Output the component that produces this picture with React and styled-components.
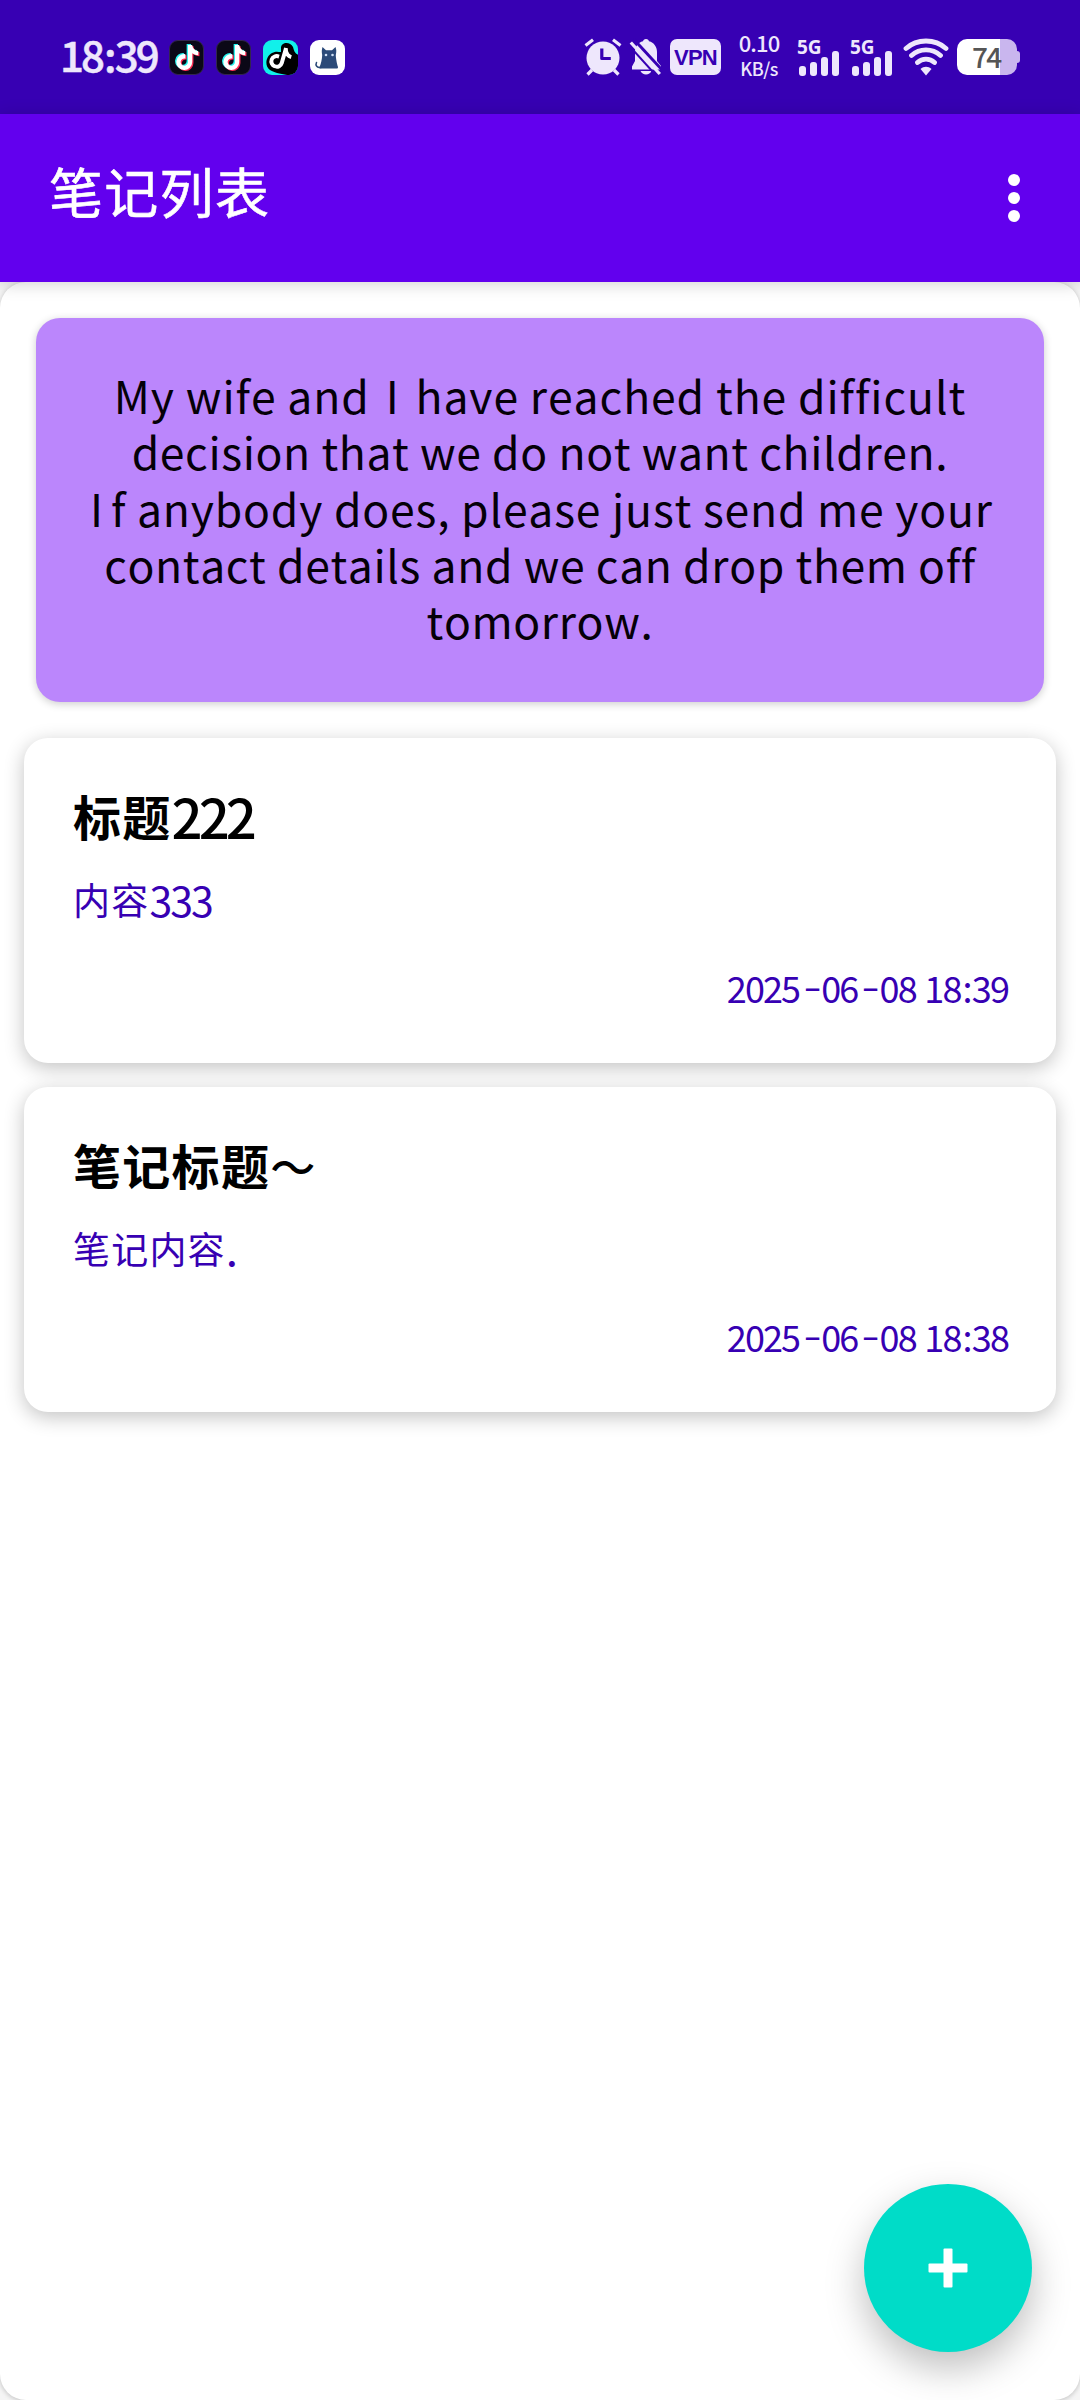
import React from "react";
import styled, { createGlobalStyle } from "styled-components";
import { FaTiktok } from "react-icons/fa";

const pallet = {
  primary: "#6200ee",
  primaryDark: "#3700b3",
  primaryLight: "#bb86fc",
  secondary: "#00dcc8",
  status: "#eee7fc",
};

const GlobalStyle = createGlobalStyle`
  * {
    box-sizing: border-box;
    margin: 0;
    padding: 0;
  }
  body {
    background-color: #f5f5f5;
    font-family: "Noto Sans CJK SC", "Noto Sans", sans-serif;
    overflow: hidden;
  }
`;

const Screen = styled.div`
  width: 1080px;
  height: 2400px;
  display: flex;
  flex-direction: column;
`;

const StatusBar = styled.header`
  flex: none;
  height: 114px;
  padding: 0 60px;
  display: flex;
  justify-content: space-between;
  background-color: ${pallet.primaryDark};
  color: ${pallet.status};
`;

const StatusGroup = styled.div`
  display: flex;
  align-items: center;
  height: 114px;
  svg {
    display: block;
    flex: none;
  }
`;

const Clock = styled.span`
  width: 109px;
  margin-top: -6px;
  font-size: 42px;
  font-weight: 500;
  line-height: 42px;
  letter-spacing: -2.9px;
  white-space: nowrap;
  -webkit-text-stroke: 0.5px ${pallet.status};
  i {
    font-style: normal;
    margin: 0 1px 0 2px;
  }
`;

const AppIcons = styled.div`
  display: flex;
  gap: 12px;
`;

const StatusIcons = styled.div`
  display: flex;
  gap: 7px;
`;

const VpnBadge = styled.span`
  width: 51px;
  height: 36px;
  margin-left: 8px;
  border-radius: 7px;
  background-color: ${pallet.status};
  color: ${pallet.primaryDark};
  font-family: "Liberation Sans", sans-serif;
  font-size: 22px;
  font-weight: 700;
  line-height: 37px;
  letter-spacing: -0.8px;
  text-align: center;
`;

const NetSpeed = styled.div`
  width: 46px;
  margin: -4px 0 0 15px;
  display: flex;
  flex-direction: column;
  align-items: center;
  font-weight: 500;
  white-space: nowrap;
  span {
    font-size: 22px;
    line-height: 25px;
    letter-spacing: -0.9px;
  }
  small {
    font-size: 18px;
    line-height: 26px;
    letter-spacing: -0.5px;
  }
`;

const SignalBlock = styled.div`
  width: 43px;
  height: 37px;
  margin-left: ${(props) => props.$gap}px;
  display: flex;
  flex-direction: column;
  justify-content: space-between;
`;

const SignalLabel = styled.span`
  height: 12px;
  font-family: "Noto Sans", sans-serif;
  font-size: 19px;
  font-weight: 700;
  line-height: 16px;
`;

const SignalBars = styled.div`
  padding-left: 2px;
  display: flex;
  align-items: flex-end;
  gap: 4px;
`;

const SignalBar = styled.i`
  width: 7px;
  height: ${(props) => props.$height}px;
  border-radius: 3px;
  background-color: ${pallet.status};
`;

const WifiBox = styled.div`
  margin-left: 10px;
`;

const Battery = styled.div`
  display: flex;
  align-items: center;
  margin-left: 8px;
`;

const BatteryBody = styled.div`
  width: 60px;
  height: 36px;
  border-radius: 10px;
  background: linear-gradient(to right, #fff 43px, #c9b6ee 43px);
  color: #555;
  font-size: 28px;
  font-weight: 500;
  line-height: 34px;
  letter-spacing: -1.6px;
  padding-left: 15px;
`;

const BatteryTip = styled.div`
  width: 3px;
  height: 12px;
  border-radius: 0 3px 3px 0;
  background-color: #c9b6ee;
`;

const AppBar = styled.div`
  flex: none;
  position: relative;
  z-index: 1;
  height: 168px;
  padding: 0 60px 0 49px;
  display: flex;
  align-items: center;
  justify-content: space-between;
  background-color: ${pallet.primary};
  box-shadow: 0 2px 16px rgba(0, 0, 0, 0.18);
  h1 {
    color: white;
    font-size: 54px;
    font-weight: 400;
    line-height: 80px;
    letter-spacing: 1.3px;
    margin-top: -14px;
    -webkit-text-stroke: 0.6px white;
  }
`;

const MoreButton = styled.button`
  all: unset;
  width: 12px;
  display: flex;
  flex-direction: column;
  gap: 6px;
  i {
    width: 12px;
    height: 12px;
    border-radius: 50%;
    background-color: white;
  }
`;

const Sheet = styled.main`
  position: relative;
  flex: 1;
  padding: 36px 24px 0;
  border-radius: 26px;
  background-color: white;
  box-shadow: 0 1px 5px rgba(0, 0, 0, 0.22);
`;

const QuoteCard = styled.section`
  height: 384px;
  margin: 0 12px 36px;
  padding-top: 49px;
  border-radius: 24px;
  background-color: ${pallet.primaryLight};
  box-shadow: 0 2px 9px rgba(0, 0, 0, 0.2);
  text-align: center;
`;

const QuoteLine = styled.p`
  height: 56.3px;
  color: #050008;
  font-size: 44.5px;
  line-height: 56.3px;
  letter-spacing: ${(props) => props.$spacing}px;
  white-space: nowrap;
  font-variant-ligatures: none;
  font-kerning: none;
`;

const WideLetter = styled.span`
  margin: ${(props) => props.$margin};
`;

const NoteList = styled.ul`
  list-style: none;
  display: flex;
  flex-direction: column;
  gap: 24px;
`;

const NoteCard = styled.li`
  height: 325px;
  padding: 45px 48px 0 49px;
  border-radius: 24px;
  background-color: white;
  box-shadow: 0 5px 20px rgba(0, 0, 0, 0.24);
  h2 {
    height: 64px;
    font-size: 48px;
    font-weight: 700;
    line-height: 64px;
    letter-spacing: 1.3px;
    color: black;
  }
  p {
    height: 60px;
    margin-top: 22px;
    font-size: 37px;
    line-height: 60px;
    letter-spacing: 1.2px;
    color: ${pallet.primaryDark};
  }
`;

const Digits = styled.span`
  font-size: ${(props) => props.$size}px;
  font-weight: ${(props) => props.$weight || 400};
  line-height: 1;
  letter-spacing: ${(props) => props.$spacing}px;
  vertical-align: ${(props) => props.$drop || 0}px;
`;

const NoteDate = styled.time`
  display: block;
  margin: 32px 0 0 0;
  font-size: 36px;
  line-height: 52px;
  letter-spacing: -1.9px;
  word-spacing: 2.5px;
  text-align: right;
  white-space: nowrap;
  color: ${pallet.primaryDark};
`;

const Dash = styled.span`
  display: inline-block;
  margin: 0 4.5px 0 7px;
  line-height: 1;
  vertical-align: 3px;
  transform: scaleX(1.45);
`;

const Colon = styled.span`
  margin: 0 1.2px 0 2px;
`;

const AddButton = styled.button`
  all: unset;
  position: absolute;
  right: 48px;
  bottom: 48px;
  width: 168px;
  height: 168px;
  border-radius: 50%;
  display: flex;
  align-items: center;
  justify-content: center;
  background-color: ${pallet.secondary};
  box-shadow: 0 16px 38px rgba(0, 0, 0, 0.26);
`;

const TiktokIcon = () => (
  <svg width="35" height="35" viewBox="0 0 35 35">
    <rect x="0.5" y="0.5" width="34" height="34" rx="8.5" fill="#0b0817" stroke="#33264f" />
    <FaTiktok x="4.5" y="4" size={25} color="#25f4ee" />
    <FaTiktok x="7" y="6" size={25} color="#fe2c55" />
    <FaTiktok x="5.8" y="5" size={25} color="#fff" />
  </svg>
);

const TiktokLiteIcon = () => (
  <svg width="35" height="35" viewBox="0 0 35 35">
    <clipPath id="lite">
      <rect width="35" height="35" rx="9" />
    </clipPath>
    <g clipPath="url(#lite)">
      <rect width="35" height="35" fill="#11f0ea" />
      <path
        d="M18 8c0-6 9-7 12-1 1 4 2 7 6 8v21h-7C20 34 11 33 7 30 1 26 3 16 9 13c4-2 6-1 9-1z"
        fill="#000"
      />
      <g transform="rotate(16 17 18)">
        <FaTiktok x="6" y="6.500" size={23} color="#fff" />
      </g>
    </g>
  </svg>
);

const CatIcon = () => (
  <svg width="35" height="35" viewBox="0 0 35 35">
    <rect width="35" height="35" rx="9" fill="#fff" />
    <path
      d="M12.500 7l3.500 3.200h6L25.500 7c1 2.500 1 5 .3 8 0 3 1.200 9 2.200 12 0 1-.5 1.500-1.500 1.500h-16c-1 0-1.500-.5-1-1.500 1.500-3 2.500-8 2.700-12-.7-3-.5-5.500.3-8z"
      fill="#2b4a78"
    />
    <path
      d="M11 27.500c-4 .5-6-2-4.500-5"
      fill="none"
      stroke="#2b4a78"
      strokeWidth="1.600"
      strokeLinecap="round"
    />
    <circle cx="16" cy="15" r="1.300" fill="#cfe0f5" />
    <circle cx="22.500" cy="15" r="1.300" fill="#cfe0f5" />
  </svg>
);

const AlarmIcon = () => (
  <svg width="38" height="38" viewBox="0 0 38 38" fill="none">
    <g stroke={pallet.status} strokeWidth="3.200">
      <path d="M1.500 7.500L9 1.800M36.500 7.500L29 1.800M8 32l-4.500 4.500M30 32l4.500 4.500" />
    </g>
    <circle cx="19" cy="20" r="16.500" fill={pallet.status} />
    <path
      d="M17.800 10.500v10h9"
      stroke={pallet.primaryDark}
      strokeWidth="3.200"
      strokeLinejoin="round"
    />
  </svg>
);

const BellOffIcon = () => (
  <svg width="33" height="38" viewBox="0 0 33 38">
    <path
      d="M17 1c1.800 0 2.800 1 3 2.300C25 4.500 28 9 28 14v9l4 5v3.500H3V28.500l3-5.500v-9c0-5 3-9.500 8-10.700C14.200 2 15.200 1 17 1z"
      fill={pallet.status}
    />
    <path d="M11.500 33h11c-1 2.300-3 3.500-5.500 3.500s-4.500-1.200-5.500-3.500z" fill={pallet.status} />
    <path d="M4.500 1L35 34" stroke={pallet.primaryDark} strokeWidth="3" />
    <path d="M1.800 4.500l29 31.500" stroke={pallet.status} strokeWidth="3.200" />
    <path d="M-1 6.500L28 38.500" stroke={pallet.primaryDark} strokeWidth="2" />
  </svg>
);

const WifiIcon = () => (
  <svg width="46" height="38" viewBox="0 0 46 38" fill="none" stroke={pallet.status} strokeWidth="4.800">
    <path
      strokeLinecap="round"
      d="M3 10.500c11-10 29-10 40 0M8.500 17.500c8.300-7.500 20.700-7.500 29 0M14.500 24.500c4.800-4.500 12.200-4.500 17 0"
    />
    <path d="M17.500 31c3.200-3 7.800-3 11 0L23 37.500z" fill={pallet.status} stroke="none" />
  </svg>
);

const Signal = ({ gap }) => (
  <SignalBlock $gap={gap}>
    <SignalLabel>5G</SignalLabel>
    <SignalBars>
      {[10, 14, 19, 25].map((height) => (
        <SignalBar key={height} $height={height} />
      ))}
    </SignalBars>
  </SignalBlock>
);

const notes = [
  { title: "标题", titleDigits: "222", content: "内容", contentDigits: "333", minute: "39" },
  { title: "笔记标题", tail: "～", content: "笔记内容", period: ".", minute: "38" },
];

const App = () => {
  return (
    <Screen>
      <GlobalStyle />
      <StatusBar>
        <StatusGroup>
          <Clock>
            18<i>:</i>39
          </Clock>
          <AppIcons>
            <TiktokIcon />
            <TiktokIcon />
            <TiktokLiteIcon />
            <CatIcon />
          </AppIcons>
        </StatusGroup>
        <StatusGroup>
          <StatusIcons>
            <AlarmIcon />
            <BellOffIcon />
          </StatusIcons>
          <VpnBadge>VPN</VpnBadge>
          <NetSpeed>
            <span>0.10</span>
            <small>KB/s</small>
          </NetSpeed>
          <Signal gap={15} />
          <Signal gap={10} />
          <WifiBox>
            <WifiIcon />
          </WifiBox>
          <Battery>
            <BatteryBody>74</BatteryBody>
            <BatteryTip />
          </Battery>
        </StatusGroup>
      </StatusBar>
      <AppBar>
        <h1>笔记列表</h1>
        <MoreButton aria-label="more">
          <i />
          <i />
          <i />
        </MoreButton>
      </AppBar>
      <Sheet>
        <QuoteCard>
          <QuoteLine $spacing={0.9}>
            My wife and <WideLetter $margin="0 5px">I</WideLetter> have reached the difficult
          </QuoteLine>
          <QuoteLine $spacing={0.6}>decision that we do not want children.</QuoteLine>
          <QuoteLine $spacing={0.8}>
            <WideLetter $margin="0 7px 0 3px">I</WideLetter>f anybody does, please just send me your
          </QuoteLine>
          <QuoteLine $spacing={0.6}>contact details and we can drop them off</QuoteLine>
          <QuoteLine $spacing={0.6}>tomorrow.</QuoteLine>
        </QuoteCard>
        <NoteList>
          {notes.map((note) => (
            <NoteCard key={note.title}>
              <h2>
                {note.title}
                {note.titleDigits && (
                  <Digits $size={54.5} $weight={500} $spacing={-4} $drop={-3}>
                    {note.titleDigits}
                  </Digits>
                )}
                {note.tail && (
                  <Digits $size={45} $weight={500} $spacing={0}>
                    {note.tail}
                  </Digits>
                )}
              </h2>
              <p>
                {note.content}
                {note.contentDigits && (
                  <Digits $size={41} $spacing={-1.9} $drop={-2}>
                    {note.contentDigits}
                  </Digits>
                )}
                {note.period && (
                  <Digits $size={44} $spacing={0} $drop={-2}>
                    {note.period}
                  </Digits>
                )}
              </p>
              <NoteDate>
                2025<Dash>-</Dash>06<Dash>-</Dash>08 18<Colon>:</Colon>
                {note.minute}
              </NoteDate>
            </NoteCard>
          ))}
        </NoteList>
        <AddButton aria-label="add">
          <svg width="40" height="40" viewBox="0 0 40 40" fill="#fff">
            <rect x="0.500" y="15.500" width="39" height="9" rx="1" />
            <rect x="15.500" y="0.500" width="9" height="39" rx="1" />
          </svg>
        </AddButton>
      </Sheet>
    </Screen>
  );
};

export default App;
